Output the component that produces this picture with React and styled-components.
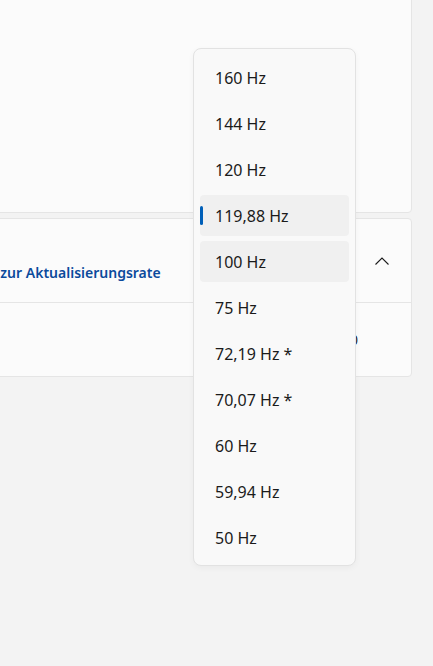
import React from "react";
import styled, { createGlobalStyle } from "styled-components";

const GlobalStyle = createGlobalStyle`
  html, body {
    margin: 0;
    padding: 0;
    background: #f3f3f3;
    overflow: hidden;
    font-family: "Segoe UI", "Noto Sans", "Open Sans", sans-serif;
    color: #1b1b1b;
  }
  * { box-sizing: border-box; }
`;

const Page = styled.div`
  position: relative;
  width: 433px;
  height: 666px;
  overflow: hidden;
`;

const Column = styled.div`
  display: flex;
  flex-direction: column;
  gap: 5px;
  margin-left: -205px;
  margin-right: 21px;
  margin-top: -8px;
`;

const Card = styled.div`
  background: #fbfbfb;
  border: 1px solid #e5e5e5;
  border-radius: 4px;
  height: ${(p) => (p.$height ? `${p.$height}px` : "auto")};
`;

const Row = styled.div`
  display: flex;
  align-items: center;
  justify-content: space-between;
  height: ${(p) => p.$height}px;
  padding-right: ${(p) => p.$padRight}px;
  border-top: ${(p) => (p.$divider ? "1px solid #e5e5e5" : "none")};
`;

const TextBlock = styled.div`
  display: flex;
  flex-direction: column;
  padding-left: 44px;
  line-height: 20px;
  padding-top: 5px;
`;

const Title = styled.span`
  font-size: 14px;
  color: #1b1b1b;
`;

const Link = styled.span`
  font-size: 14px;
  font-weight: 600;
  color: #0b4a9c;
`;

const Value = styled.span`
  font-size: 14px;
  color: #1b1b1b;
`;

const Chevron = () => (
  <svg width="14" height="8" viewBox="0 0 14 8">
    <polyline points="0.5,7.5 7,1 13.5,7.5" fill="none" stroke="#1b1b1b" strokeWidth="1.1" />
  </svg>
);

const Menu = styled.div`
  position: absolute;
  left: 193px;
  top: 48px;
  width: 163px;
  height: 518px;
  background: #f9f9f9;
  border: 1px solid #e2e2e2;
  border-radius: 8px;
  box-shadow: 0 2px 6px rgba(0, 0, 0, 0.04);
  padding: 8px 6px 7px;
  display: flex;
  flex-direction: column;
  gap: 5px;
`;

const Item = styled.div`
  position: relative;
  height: 41px;
  border-radius: 4px;
  display: flex;
  align-items: center;
  padding-left: 15px;
  font-size: 16px;
  color: #1b1b1b;
  background: ${(p) => (p.$active ? "#f0f0f0" : "transparent")};
`;

const Indicator = styled.span`
  position: absolute;
  left: 0;
  top: 11px;
  width: 3px;
  height: 19px;
  border-radius: 2px;
  background: #005fb8;
`;

const rates = [
  "160 Hz",
  "144 Hz",
  "120 Hz",
  "119,88 Hz",
  "100 Hz",
  "75 Hz",
  "72,19 Hz *",
  "70,07 Hz *",
  "60 Hz",
  "59,94 Hz",
  "50 Hz",
];

export default function App() {
  return (
    <Page>
      <GlobalStyle />
      <Column>
        <Card $height={221} />
        <Card>
          <Row $height={83} $padRight={22}>
            <TextBlock>
              <Title>Aktualisierungsrate</Title>
              <Link>Weitere Informationen zur Aktualisierungsrate</Link>
            </TextBlock>
            <Chevron />
          </Row>
          <Row $height={74} $padRight={53} $divider>
            <span />
            <Value>0</Value>
          </Row>
        </Card>
      </Column>
      <Menu>
        {rates.map((r, i) => (
          <Item key={r} $active={i === 3 || i === 4}>
            {i === 3 && <Indicator />}
            {r}
          </Item>
        ))}
      </Menu>
    </Page>
  );
}
